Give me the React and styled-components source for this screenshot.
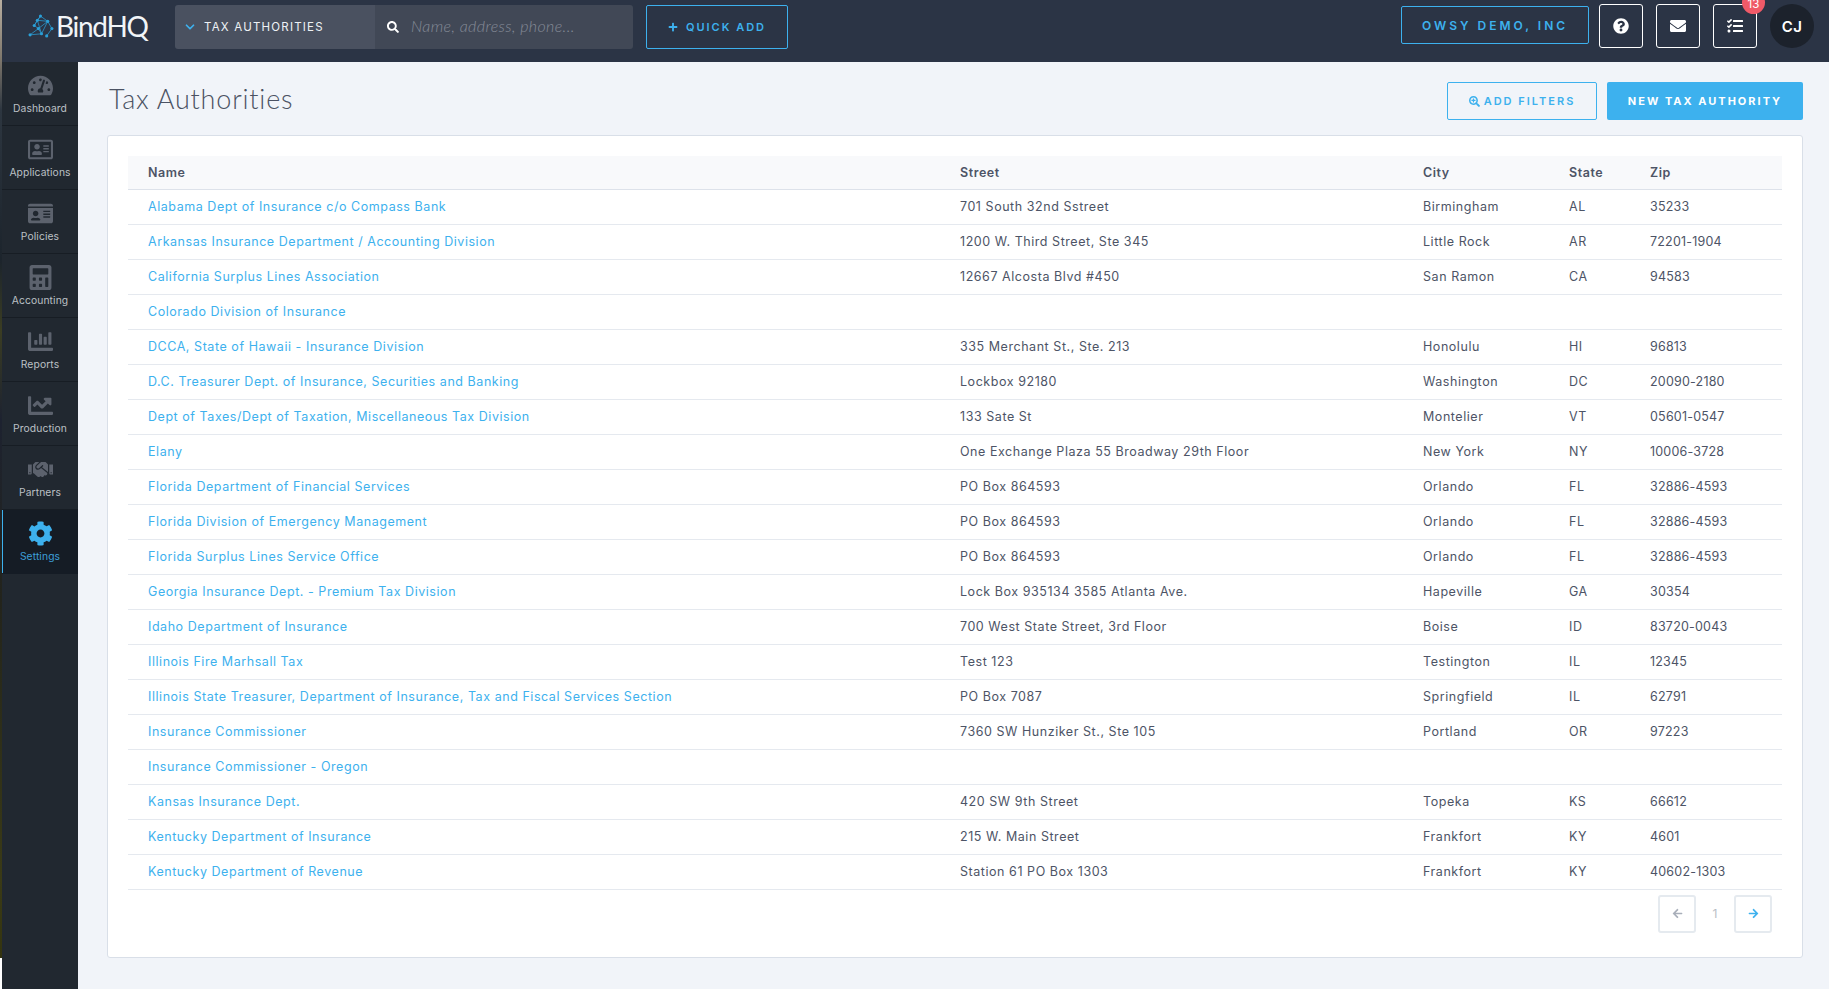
import React from 'react';
import styled, { createGlobalStyle } from 'styled-components';
import {
  FaSearch, FaPlus, FaQuestionCircle, FaEnvelope, FaTasks, FaSearchPlus,
  FaTachometerAlt, FaRegAddressCard, FaIdCard, FaCalculator, FaChartBar, FaChartLine,
  FaHandshake, FaCog, FaArrowLeft, FaArrowRight,
} from 'react-icons/fa';
import { ChevronDown } from 'lucide-react';

const GlobalStyle = createGlobalStyle`
  html, body {
    margin: 0;
    padding: 0;
    height: 100%;
    overflow: hidden;
  }
  body {
    font-family: 'Inter', 'Liberation Sans', sans-serif;
    background: linear-gradient(
      to bottom,
      #b8aea0 0,
      #7d766b 60px,
      #2d3640 110px,
      #1c242c 260px,
      #3b3d22 330px,
      #1d2230 420px,
      #23241c 600px,
      #3a3a16 880px,
      #34340f 958px,
      #ffffff 958px
    );
  }
  * { box-sizing: border-box; }
`;

const Page = styled.div`
  margin-left: 2px;
  height: 989px;
  display: flex;
  flex-direction: column;
`;

const TopBar = styled.header`
  height: 62px;
  flex: none;
  background: #2b3445;
  display: flex;
  align-items: flex-start;
  padding: 5px 15px 0 25px;
`;

const Logo = styled.div`
  width: 148px;
  height: 41px;
  display: flex;
  align-items: center;
  color: #f2f5f8;
  font-family: 'Lato', sans-serif;
  font-weight: 400;
  font-size: 28px;
  letter-spacing: -1.3px;
`;

const SearchGroup = styled.div`
  display: flex;
  height: 44px;
  width: 458px;
  border-radius: 3px;
  overflow: hidden;
`;

const ScopeSelect = styled.div`
  width: 200px;
  background: #4a5160;
  display: flex;
  align-items: center;
  padding-left: 8px;
  gap: 7px;
  color: #3db1ee;
  span {
    color: #eef1f5;
    font-size: 11.5px;
    letter-spacing: 1.2px;
  }
`;

const SearchBox = styled.div`
  flex: 1;
  background: #414856;
  display: flex;
  align-items: center;
  padding-left: 12px;
  gap: 12px;
  color: #fff;
  span {
    padding-bottom: 3px;
    color: #858b96;
    font-family: 'Lato', sans-serif;
    font-style: italic;
    font-weight: 300;
    font-size: 16px;
    letter-spacing: 0.4px;
  }
`;

const OutlineBtn = styled.div`
  display: flex;
  align-items: center;
  justify-content: center;
  gap: ${(p) => p.$gap || 8}px;
  width: ${(p) => p.$w}px;
  height: ${(p) => p.$h}px;
  flex: none;
  border: 1px solid #3db1ee;
  border-radius: 2px;
  color: #3db1ee;
  font-size: ${(p) => p.$fs || 11}px;
  font-weight: 600;
  letter-spacing: ${(p) => p.$ls || 2}px;
  text-transform: uppercase;
`;

const QuickAdd = styled(OutlineBtn)`
  margin-left: 13px;
`;

const OrgBtn = styled(OutlineBtn)`
  margin-top: 1px;
`;

const Spacer = styled.div`
  flex: 1;
`;

const IconBtn = styled.div`
  position: relative;
  width: 44px;
  height: 44px;
  flex: none;
  margin-top: -1px;
  margin-left: ${(p) => p.$ml || 13}px;
  border: 1px solid #fff;
  border-radius: 3px;
  display: flex;
  align-items: center;
  justify-content: center;
  color: #fff;
  font-size: 16px;
`;

const Badge = styled.span`
  position: absolute;
  top: -14px;
  right: -9px;
  width: 23px;
  height: 23px;
  padding-top: 6px;
  border-radius: 50%;
  background: #ef5a68;
  color: #fff;
  font-size: 11.5px;
  text-align: center;
  line-height: 15px;
`;

const Avatar = styled.div`
  width: 44px;
  height: 44px;
  margin: -1px 0 0 13px;
  flex: none;
  border-radius: 50%;
  background: #1c222c;
  color: #fff;
  font-size: 15px;
  font-weight: 600;
  letter-spacing: 0.5px;
  display: flex;
  align-items: center;
  justify-content: center;
`;

const Body = styled.div`
  flex: 1;
  display: flex;
  min-height: 0;
`;

const Sidebar = styled.nav`
  width: 76px;
  flex: none;
  background: #212830;
`;

const NavItem = styled.div`
  height: 64px;
  display: flex;
  flex-direction: column;
  align-items: center;
  padding-top: 11px;
  gap: 4px;
  border-bottom: 1px solid ${(p) => (p.$active ? 'transparent' : '#171d24')};
  box-shadow: ${(p) => (p.$active ? 'inset 1px 0 0 #3db1ee' : 'none')};
  background: ${(p) => (p.$active ? '#151c25' : 'transparent')};
  color: ${(p) => (p.$active ? '#3db1ee' : '#5c626d')};
  font-size: 25px;
  svg {
    height: 25px;
    display: block;
  }
  span {
    color: ${(p) => (p.$active ? '#3d9fd8' : '#bcc0c5')};
    font-size: 10.3px;
    line-height: 12px;
    letter-spacing: 0.1px;
  }
`;

const Main = styled.main`
  flex: 1;
  background: #f1f4f9;
  padding: 20px 26px 0 29px;
  min-width: 0;
  overflow: hidden;
`;

const PageHead = styled.div`
  display: flex;
  align-items: center;
  height: 38px;
`;

const Title = styled.h1`
  margin: 0;
  flex: 1;
  padding: 0 0 5px 2px;
  font-family: 'Lato', sans-serif;
  font-weight: 300;
  font-size: 27px;
  letter-spacing: 0.8px;
  color: #4b5263;
`;

const PrimaryBtn = styled.div`
  width: 196px;
  height: 38px;
  margin-left: 10px;
  background: #3db1ee;
  border-radius: 2px;
  color: #fff;
  font-size: 11px;
  font-weight: 700;
  letter-spacing: 2px;
  display: flex;
  align-items: center;
  justify-content: center;
`;

const Card = styled.section`
  margin-top: 15px;
  height: 823px;
  background: #fff;
  border: 1px solid #d9dfe8;
  border-radius: 3px;
  padding: 20px 20px 0;
`;

const Table = styled.table`
  width: 100%;
  border-collapse: collapse;
  table-layout: fixed;
  font-size: 12.5px;
  letter-spacing: 0.55px;
  color: #4d5466;
`;

const Th = styled.th`
  width: ${(p) => p.$w}px;
  height: 33px;
  padding: 1px 0 0 ${(p) => p.$pl || 0}px;
  text-align: left;
  font-weight: 600;
  background: #f8f9fb;
  border-bottom: 1px solid #dde2ea;
`;

const Td = styled.td`
  height: 35px;
  padding: 0 0 0 ${(p) => p.$pl || 0}px;
  border-bottom: 1px solid #e5e9ef;
`;

const ZipCell = styled(Td)`
  letter-spacing: 0.2px;
`;

const NameLink = styled.a`
  color: #3db1ee;
  text-decoration: none;
`;

const Pager = styled.div`
  display: flex;
  justify-content: flex-end;
  align-items: center;
  margin-top: 5px;
  padding-right: 10px;
`;

const PageBtn = styled.div`
  width: 38px;
  height: 38px;
  border: 2px solid #e5eaef;
  border-radius: 3px;
  display: flex;
  align-items: center;
  justify-content: center;
  font-size: 11px;
  color: ${(p) => (p.$on ? '#3db1ee' : '#a9afba')};
`;

const PageNum = styled.span`
  width: 38px;
  text-align: center;
  font-size: 12px;
  color: #b9bec6;
`;

const NAV = [
  ['Dashboard', FaTachometerAlt],
  ['Applications', FaRegAddressCard],
  ['Policies', FaIdCard],
  ['Accounting', FaCalculator],
  ['Reports', FaChartBar],
  ['Production', FaChartLine],
  ['Partners', FaHandshake],
  ['Settings', FaCog],
];

const ROWS = [
  ['Alabama Dept of Insurance c/o Compass Bank', '701 South 32nd Sstreet', 'Birmingham', 'AL', '35233'],
  ['Arkansas Insurance Department / Accounting Division', '1200 W. Third Street, Ste 345', 'Little Rock', 'AR', '72201-1904'],
  ['California Surplus Lines Association', '12667 Alcosta Blvd #450', 'San Ramon', 'CA', '94583'],
  ['Colorado Division of Insurance', '', '', '', ''],
  ['DCCA, State of Hawaii - Insurance Division', '335 Merchant St., Ste. 213', 'Honolulu', 'HI', '96813'],
  ['D.C. Treasurer Dept. of Insurance, Securities and Banking', 'Lockbox 92180', 'Washington', 'DC', '20090-2180'],
  ['Dept of Taxes/Dept of Taxation, Miscellaneous Tax Division', '133 Sate St', 'Montelier', 'VT', '05601-0547'],
  ['Elany', 'One Exchange Plaza 55 Broadway 29th Floor', 'New York', 'NY', '10006-3728'],
  ['Florida Department of Financial Services', 'PO Box 864593', 'Orlando', 'FL', '32886-4593'],
  ['Florida Division of Emergency Management', 'PO Box 864593', 'Orlando', 'FL', '32886-4593'],
  ['Florida Surplus Lines Service Office', 'PO Box 864593', 'Orlando', 'FL', '32886-4593'],
  ['Georgia Insurance Dept. - Premium Tax Division', 'Lock Box 935134 3585 Atlanta Ave.', 'Hapeville', 'GA', '30354'],
  ['Idaho Department of Insurance', '700 West State Street, 3rd Floor', 'Boise', 'ID', '83720-0043'],
  ['Illinois Fire Marhsall Tax', 'Test 123', 'Testington', 'IL', '12345'],
  ['Illinois State Treasurer, Department of Insurance, Tax and Fiscal Services Section', 'PO Box 7087', 'Springfield', 'IL', '62791'],
  ['Insurance Commissioner', '7360 SW Hunziker St., Ste 105', 'Portland', 'OR', '97223'],
  ['Insurance Commissioner - Oregon', '', '', '', ''],
  ['Kansas Insurance Dept.', '420 SW 9th Street', 'Topeka', 'KS', '66612'],
  ['Kentucky Department of Insurance', '215 W. Main Street', 'Frankfort', 'KY', '4601'],
  ['Kentucky Department of Revenue', 'Station 61 PO Box 1303', 'Frankfort', 'KY', '40602-1303'],
];

const LOGO_NODES = [[2, 21], [6, 12], [10, 15], [12, 3], [19, 8], [13, 20], [23, 15], [18, 22], [9, 7]];

const LogoMark = () => (
  <svg width="29" height="26" viewBox="0 0 26 25" fill="none" stroke="#2aa0d8" strokeWidth="0.7">
    <path d="M2 21 L10 15 L6 12 L12 3 L19 8 L10 15 L13 20 L2 21 M12 3 L9 7 L19 8 M6 12 L9 7 L13 20 M19 8 L23 15 L18 22 M19 8 L13 20" />
    {LOGO_NODES.map(([x, y]) => (
      <circle key={`${x}-${y}`} cx={x} cy={y} r="1.5" fill="#2aa0d8" stroke="none" />
    ))}
  </svg>
);

export default function App() {
  return (
    <Page>
      <GlobalStyle />
      <TopBar>
        <Logo>
          <LogoMark />
          BindHQ
        </Logo>
        <SearchGroup>
          <ScopeSelect>
            <ChevronDown size={14} strokeWidth={3} />
            <span>TAX AUTHORITIES</span>
          </ScopeSelect>
          <SearchBox>
            <FaSearch size={12} />
            <span>Name, address, phone...</span>
          </SearchBox>
        </SearchGroup>
        <QuickAdd $w={142} $h={44}>
          <FaPlus size={10} />
          Quick Add
        </QuickAdd>
        <Spacer />
        <OrgBtn $w={188} $h={38} $fs={12} $ls={3}>Owsy Demo, Inc</OrgBtn>
        <IconBtn $ml={10}><FaQuestionCircle /></IconBtn>
        <IconBtn><FaEnvelope /></IconBtn>
        <IconBtn>
          <FaTasks />
          <Badge>13</Badge>
        </IconBtn>
        <Avatar>CJ</Avatar>
      </TopBar>
      <Body>
        <Sidebar>
          {NAV.map(([label, Icon]) => (
            <NavItem key={label} $active={label === 'Settings'}>
              <Icon />
              <span>{label}</span>
            </NavItem>
          ))}
        </Sidebar>
        <Main>
          <PageHead>
            <Title>Tax Authorities</Title>
            <OutlineBtn $w={150} $h={38} $gap={4}>
              <FaSearchPlus size={11} />
              Add Filters
            </OutlineBtn>
            <PrimaryBtn>NEW TAX AUTHORITY</PrimaryBtn>
          </PageHead>
          <Card>
            <Table>
              <thead>
                <tr>
                  <Th $w={832} $pl={20}>Name</Th>
                  <Th $w={463}>Street</Th>
                  <Th $w={146}>City</Th>
                  <Th $w={81}>State</Th>
                  <Th>Zip</Th>
                </tr>
              </thead>
              <tbody>
                {ROWS.map((r) => (
                  <tr key={r[0]}>
                    <Td $pl={20}><NameLink>{r[0]}</NameLink></Td>
                    <Td>{r[1]}</Td>
                    <Td>{r[2]}</Td>
                    <Td>{r[3]}</Td>
                    <ZipCell>{r[4]}</ZipCell>
                  </tr>
                ))}
              </tbody>
            </Table>
            <Pager>
              <PageBtn><FaArrowLeft /></PageBtn>
              <PageNum>1</PageNum>
              <PageBtn $on><FaArrowRight /></PageBtn>
            </Pager>
          </Card>
        </Main>
      </Body>
    </Page>
  );
}
